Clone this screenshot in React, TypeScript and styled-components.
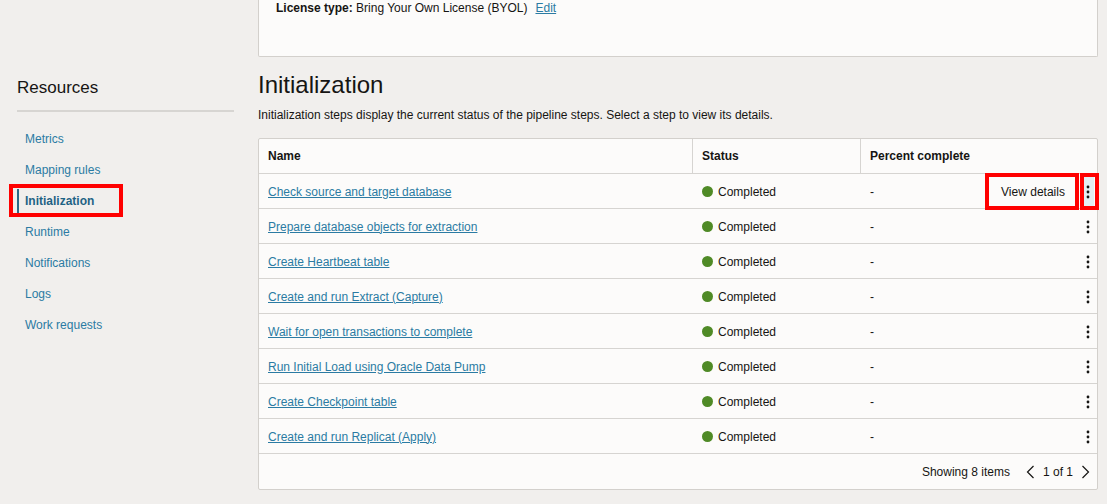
import React from "react";
import styled, { createGlobalStyle } from "styled-components";

const Global = createGlobalStyle`
  html, body { margin: 0; padding: 0; }
  body {
    background: #f1efed;
    font-family: "Liberation Sans", Arial, sans-serif;
    color: #161513;
    font-size: 12px;
  }
`;

const Page = styled.div`
  display: flex;
  align-items: flex-start;
  width: 1107px;
  height: 504px;
  overflow: hidden;
  padding-left: 17px;
  box-sizing: border-box;
`;

const Sidebar = styled.aside`
  width: 217px;
  padding-top: 78px;
  flex-shrink: 0;
`;

const SideTitle = styled.h2`
  margin: 0;
  font-size: 17px;
  line-height: 20px;
  font-weight: normal;
  color: #161513;
  padding-bottom: 12px;
  border-bottom: 2px solid #d7d5d2;
`;

const NavList = styled.nav`
  display: flex;
  flex-direction: column;
  gap: 7px;
  padding-top: 15px;
`;

const NavItem = styled.a<{ $active?: boolean }>`
  position: relative;
  display: block;
  padding: 4px 0 4px 6px;
  line-height: 16px;
  font-size: 12px;
  border-left: 2px solid ${(p) => (p.$active ? "#2b6a87" : "transparent")};
  color: ${(p) => (p.$active ? "#1f6385" : "#2b7ba3")};
  font-weight: ${(p) => (p.$active ? "bold" : "normal")};
  text-decoration: none;
`;

const Highlight = styled.span<{ $l: number; $t: number; $w: number; $h: number }>`
  position: absolute;
  left: ${(p) => p.$l}px;
  top: ${(p) => p.$t}px;
  width: ${(p) => p.$w}px;
  height: ${(p) => p.$h}px;
  border: 4px solid #ff0000;
  box-sizing: border-box;
  pointer-events: none;
  z-index: 2;
`;

const Main = styled.main`
  width: 840px;
  margin-left: 24px;
  flex-shrink: 0;
`;

const TopCard = styled.section`
  height: 57px;
  box-sizing: border-box;
  background: #fcfbfa;
  border: 1px solid #d3d0cc;
  border-top: none;
  border-radius: 0 0 2px 2px;
  padding-left: 17px;
  line-height: 16px;
`;

const Label = styled.b`
  font-weight: bold;
`;

const Link = styled.a`
  color: #2b7ba3;
  text-decoration: underline;
`;

const EditLink = styled(Link)`
  margin-left: 8px;
`;

const Heading = styled.h1`
  margin: 14px 0 0;
  font-size: 24px;
  line-height: 28px;
  font-weight: normal;
  color: #161513;
`;

const Description = styled.p`
  margin: 8px 0 0;
  line-height: 16px;
  font-size: 12px;
`;

const Table = styled.div`
  margin-top: 15px;
  background: #fcfbfa;
  border: 1px solid #d3d0cc;
  border-radius: 2px;
`;

const Row = styled.div`
  display: grid;
  grid-template-columns: 433px 168px 1fr;
  height: 35px;
  border-bottom: 1px solid #d6d4d1;
  box-sizing: border-box;
`;

const HeadCell = styled.div<{ $sep?: boolean }>`
  display: flex;
  align-items: center;
  padding-left: 9px;
  font-weight: bold;
  font-size: 12px;
  border-left: ${(p) => (p.$sep ? "1px solid #d6d4d1" : "none")};
`;

const Cell = styled.div<{ $pad?: number }>`
  display: flex;
  align-items: center;
  padding-left: ${(p) => p.$pad ?? 9}px;
  font-size: 12px;
  min-width: 0;
  padding-top: 1px;
`;

const StepLink = styled(Link)`
  font-size: 12px;
`;

const Dot = styled.span`
  width: 11px;
  height: 11px;
  border-radius: 50%;
  background: #4f8a26;
  margin-right: 5px;
  flex-shrink: 0;
`;

const PercentCell = styled(Cell)`
  justify-content: space-between;
  padding-right: 3px;
`;

const Actions = styled.div`
  display: flex;
  align-items: center;
  gap: 6px;
`;

const ViewButton = styled.button`
  position: relative;
  width: 86px;
  height: 29px;
  border: none;
  background: #fcfbfa;
  font-family: inherit;
  font-size: 12px;
  color: #161513;
  padding: 0;
`;

const Kebab = styled.button<{ $focus?: boolean }>`
  position: relative;
  width: 12px;
  height: 29px;
  border: none;
  padding: 0;
  background: ${(p) => (p.$focus ? "#e3eef2" : "transparent")};
  display: flex;
  align-items: center;
  justify-content: center;
`;

const Footer = styled.div`
  height: 35px;
  display: flex;
  align-items: center;
  justify-content: flex-end;
  padding-right: 7px;
  font-size: 12px;
`;

const Pager = styled.div`
  display: flex;
  align-items: center;
  gap: 8px;
  margin-left: 16px;
`;

const KebabIcon = () => (
  <svg width="4" height="14" viewBox="0 0 4 14">
    <circle cx="2" cy="2" r="1.4" fill="#161513" />
    <circle cx="2" cy="7" r="1.4" fill="#161513" />
    <circle cx="2" cy="12" r="1.4" fill="#161513" />
  </svg>
);

const Chevron = ({ dir }: { dir: "left" | "right" }) => (
  <svg width="9" height="14" viewBox="0 0 9 14">
    <polyline
      points={dir === "left" ? "7.5,1 1.5,7 7.5,13" : "1.5,1 7.5,7 1.5,13"}
      fill="none"
      stroke="#161513"
      strokeWidth="1.2"
    />
  </svg>
);

const steps = [
  "Check source and target database",
  "Prepare database objects for extraction",
  "Create Heartbeat table",
  "Create and run Extract (Capture)",
  "Wait for open transactions to complete",
  "Run Initial Load using Oracle Data Pump",
  "Create Checkpoint table",
  "Create and run Replicat (Apply)",
];

const navItems = [
  "Metrics",
  "Mapping rules",
  "Initialization",
  "Runtime",
  "Notifications",
  "Logs",
  "Work requests",
];

export default function App() {
  return (
    <>
      <Global />
      <Page>
        <Sidebar>
          <SideTitle>Resources</SideTitle>
          <NavList>
            {navItems.map((n) => (
              <NavItem key={n} $active={n === "Initialization"}>
                {n}
                {n === "Initialization" && (
                  <Highlight $l={-10} $t={-5} $w={114} $h={33} />
                )}
              </NavItem>
            ))}
          </NavList>
        </Sidebar>
        <Main>
          <TopCard>
            <Label>License type:</Label> Bring Your Own License (BYOL)
            <EditLink>Edit</EditLink>
          </TopCard>
          <Heading>Initialization</Heading>
          <Description>
            Initialization steps display the current status of the pipeline steps. Select a step
            to view its details.
          </Description>
          <Table>
            <Row>
              <HeadCell>Name</HeadCell>
              <HeadCell $sep>Status</HeadCell>
              <HeadCell $sep>Percent complete</HeadCell>
            </Row>
            {steps.map((s, i) => (
              <Row key={s}>
                <Cell>
                  <StepLink>{s}</StepLink>
                </Cell>
                <Cell $pad={10}>
                  <Dot />
                  Completed
                </Cell>
                <PercentCell $pad={10}>
                  <span>-</span>
                  <Actions>
                    {i === 0 && (
                      <ViewButton>
                        View details
                        <Highlight $l={-5} $t={-4} $w={94} $h={37} />
                      </ViewButton>
                    )}
                    <Kebab $focus={i === 0}>
                      <KebabIcon />
                      {i === 0 && <Highlight $l={-2} $t={-4} $w={19} $h={37} />}
                    </Kebab>
                  </Actions>
                </PercentCell>
              </Row>
            ))}
            <Footer>
              Showing 8 items
              <Pager>
                <Chevron dir="left" />
                <span>1 of 1</span>
                <Chevron dir="right" />
              </Pager>
            </Footer>
          </Table>
        </Main>
      </Page>
    </>
  );
}
